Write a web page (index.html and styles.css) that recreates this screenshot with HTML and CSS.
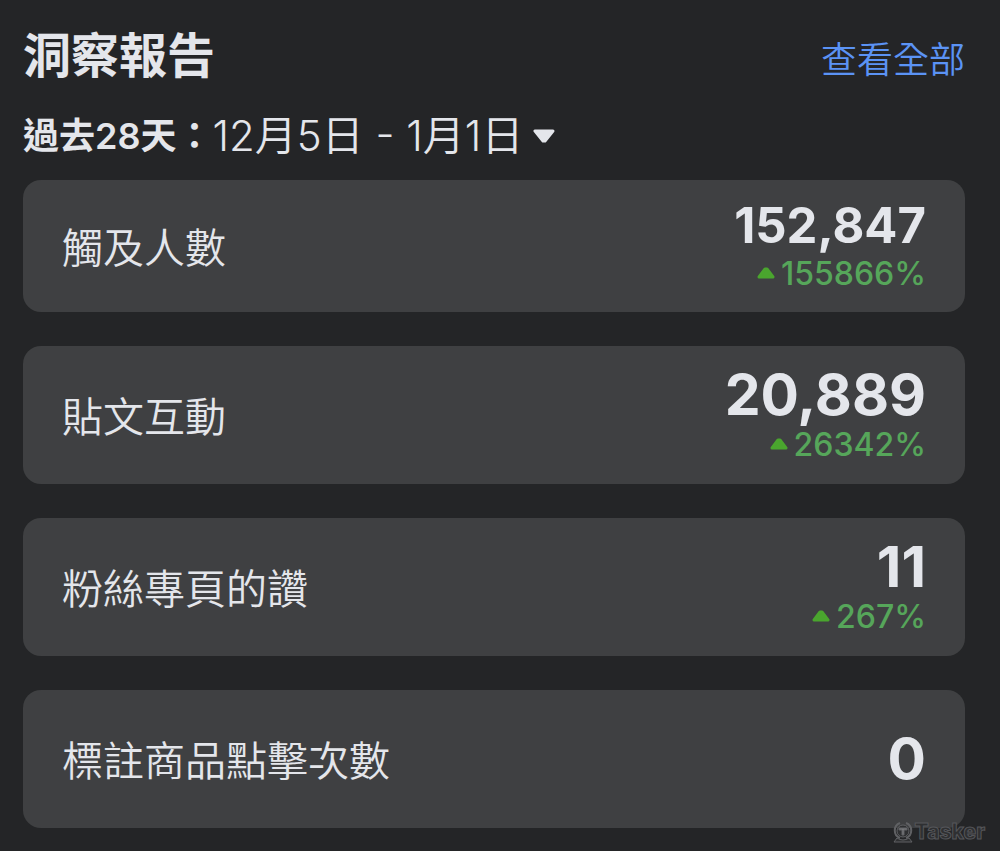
FILE: index.html
```html
<!DOCTYPE html>
<html lang="zh-Hant">
<head>
    <meta charset="UTF-8">
    <meta name="viewport" content="width=device-width, initial-scale=1.0">
    <title>洞察報告</title>
    <link rel="stylesheet" href="styles.css">
</head>
<body>
    <header class="header">
        <h1>洞察報告</h1>
        <a href="#all" class="view-all">查看全部</a>
    </header>

    <button type="button" class="period" aria-haspopup="listbox">
        <span class="period-name">過去28天&#xFF1A;</span>
        <span class="period-dates">12月5日 - 1月1日</span>
        <svg class="caret" viewBox="0 0 22 16" aria-hidden="true">
            <path d="M2 3H20L12 13H10Z"/>
        </svg>
    </button>

    <dl class="cards">
        <div class="card compact">
            <dt>觸及人數</dt>
            <dd>
                <span class="value">152,847</span>
                <span class="change">
                    <svg class="up" viewBox="0 0 18 12" aria-hidden="true"><path d="M2 10L8 2H10L16 10Z"/></svg>
                    155866%
                </span>
            </dd>
        </div>
        <div class="card">
            <dt>貼文互動</dt>
            <dd>
                <span class="value">20,889</span>
                <span class="change">
                    <svg class="up" viewBox="0 0 18 12" aria-hidden="true"><path d="M2 10L8 2H10L16 10Z"/></svg>
                    26342%
                </span>
            </dd>
        </div>
        <div class="card">
            <dt>粉絲專頁的讚</dt>
            <dd>
                <span class="value">11</span>
                <span class="change">
                    <svg class="up" viewBox="0 0 18 12" aria-hidden="true"><path d="M2 10L8 2H10L16 10Z"/></svg>
                    267%
                </span>
            </dd>
        </div>
        <div class="card">
            <dt>標註商品點擊次數</dt>
            <dd>
                <span class="value">0</span>
            </dd>
        </div>
    </dl>

    <div class="watermark">
        <svg viewBox="0 0 20 22" aria-hidden="true">
            <path class="ring" d="M7 17A8 8 0 0 1 7 2M13 2A8 8 0 0 1 13 17"/>
            <circle cx="10" cy="10" r="6"/>
            <path class="letter" d="M6 7H14V9H11V14H9V9H6Z"/>
            <path d="M1 21L4 17Q10 21 16 17L19 21Z"/>
        </svg>
        <span>Tasker</span>
    </div>
</body>
</html>
```

FILE: styles.css
```css
* {
    box-sizing: border-box;
}
body {
    position: relative;
    margin: 0;
    padding: 24px 35px 24px 23px;
    background-color: #242527;
    color: #e4e6eb;
    font-family: Inter, "Noto Sans CJK TC", sans-serif;
}
.header {
    display: flex;
    justify-content: space-between;
    align-items: flex-end;
}
h1 {
    margin: 0;
    font-size: 48px;
    line-height: 64px;
    font-weight: 700;
}
.view-all {
    color: #5b93f5;
    font-size: 36px;
    line-height: 56px;
    font-weight: 350;
    text-decoration: none;
}
.period {
    display: flex;
    align-items: center;
    margin: 18px 0 14px;
    padding: 0;
    border: none;
    background: none;
    color: inherit;
    font-family: inherit;
    line-height: 60px;
    cursor: pointer;
}
.period-name {
    font-size: 36px;
    font-weight: 600;
}
.period-dates {
    font-size: 42px;
    font-weight: 350;
}
.caret {
    width: 22px;
    height: 16px;
    margin-left: 10px;
    fill: #e4e6eb;
    stroke: #e4e6eb;
    stroke-width: 3;
    stroke-linejoin: round;
}
.cards {
    display: grid;
    gap: 34px;
    margin: 0;
}
.card {
    display: flex;
    justify-content: space-between;
    align-items: center;
    min-height: 138px;
    padding: 12px 39px;
    border-radius: 18px;
    background-color: #3f4042;
}
.card dt {
    padding-top: 4px;
    font-size: 41px;
    line-height: 60px;
    font-weight: 350;
}
.card dd {
    margin: 0;
    text-align: right;
}
.value {
    display: block;
    font-size: 57px;
    line-height: 64px;
    font-weight: 700;
}
.change {
    display: flex;
    justify-content: flex-end;
    align-items: center;
    gap: 6px;
    padding-bottom: 4px;
    color: #56a65a;
    font-size: 32px;
    line-height: 36px;
    font-weight: 500;
}
.up {
    width: 18px;
    height: 12px;
    margin-bottom: 2px;
    fill: #4aa52e;
    stroke: #4aa52e;
    stroke-width: 3;
    stroke-linejoin: round;
}
.compact {
    min-height: 132px;
}
.compact .value {
    font-size: 49px;
    line-height: 60px;
}
/* sits over the corner of the last card */
.watermark {
    position: absolute;
    right: 15px;
    bottom: 8px;
    display: flex;
    align-items: center;
    gap: 2px;
    color: #2f3032;
    font-size: 21px;
    line-height: 24px;
    font-weight: 800;
    -webkit-text-stroke: 1px #55565a;
}
.watermark svg {
    width: 20px;
    height: 22px;
    fill: #2f3032;
    stroke: #606164;
    stroke-width: 1;
}
.watermark .ring {
    fill: none;
    stroke-width: 2;
}
.watermark .letter {
    fill: #77787a;
}
```
